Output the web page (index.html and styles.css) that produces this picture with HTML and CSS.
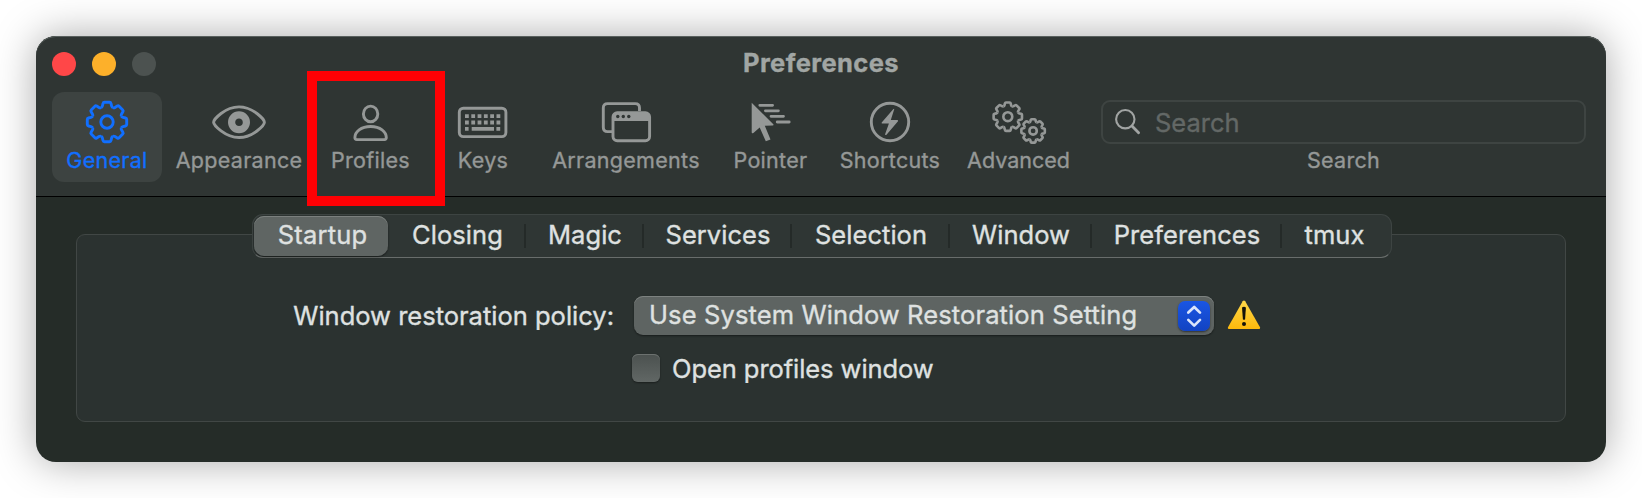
FILE: index.html
```html
<!DOCTYPE html>
<html lang="en">
<head>
<meta charset="utf-8">
<title>Preferences</title>
<link rel="stylesheet" href="styles.css">
</head>
<body>
<main class="window">
  <header class="toolbar">
    <div class="titlebar">
      <div class="lights"><i class="light close"></i><i class="light minimize"></i><i class="light zoom"></i></div>
      <h1 class="title">Preferences</h1>
    </div>
    <nav class="items">
      <div class="item active">
        <svg class="icon" width="44" height="44" viewBox="-22 -22 44 44">
          <defs>
            <path id="tooth" d="M-5.9-14.3Q-4.9-14.8-4.6-16L-4-18.5Q-3.7-19.7-2.6-19.7H2.6Q3.7-19.7 4-18.5L4.6-16Q4.9-14.8 5.9-14.3" vector-effect="non-scaling-stroke"/>
            <g id="gear">
              <use href="#tooth"/><use href="#tooth" transform="rotate(45)"/><use href="#tooth" transform="rotate(90)"/><use href="#tooth" transform="rotate(135)"/><use href="#tooth" transform="rotate(180)"/><use href="#tooth" transform="rotate(225)"/><use href="#tooth" transform="rotate(270)"/><use href="#tooth" transform="rotate(315)"/>
              <circle r="6.2" vector-effect="non-scaling-stroke"/>
            </g>
          </defs>
          <use href="#gear" class="line"/>
        </svg>
        <span class="label">General</span>
      </div>
      <div class="item">
        <svg class="icon" width="56" height="44" viewBox="-28 -22 56 44">
          <path class="line" d="M-25.4 0.3C-25.4-2.6-14-15.1 0-15.1S25.4-2.6 25.4 0.3S14 15.5 0 15.5S-25.4 3 -25.4 0.3Z"/>
          <circle cy="0.2" r="7.4" fill="none" stroke="currentColor" stroke-width="7.2"/>
        </svg>
        <span class="label">Appearance</span>
      </div>
      <div class="item">
        <svg class="icon" width="44" height="44" viewBox="-22 -22 44 44">
          <ellipse class="line" cx="-0.4" cy="-8.1" rx="7.2" ry="7.8"/>
          <path class="line" d="M-16.1 15.6C-16.1 10-10 4.5-.4 4.5S15.3 10 15.3 15.6Q15.3 17.6 13.4 17.6H-14.2Q-16.1 17.6-16.1 15.6Z"/>
        </svg>
        <span class="label">Profiles</span>
      </div>
      <div class="item">
        <svg class="icon" width="52" height="44" viewBox="-26 -22 52 44">
          <rect class="line" x="-23.7" y="-13.8" width="46.6" height="28.4" rx="4"/>
          <path d="M-18-5.8H17.4M-18 .5H17.4" fill="none" stroke="currentColor" stroke-width="3.8" stroke-dasharray="3.8 2.5"/>
          <path d="M-18 6.9h3.6M-11.3 6.9h22.3M13.4 6.9h3.8" fill="none" stroke="currentColor" stroke-width="3.6"/>
        </svg>
        <span class="label">Keys</span>
      </div>
      <div class="item">
        <svg class="icon" width="52" height="44" viewBox="-26 -22 52 44">
          <path class="line" d="M-14 9.6H-18.4Q-22.7 9.6-22.7 5.3V-14.1Q-22.7-18.4-18.4-18.4H9.2Q13.5-18.4 13.5-14.1V-11"/>
          <rect class="line" x="-13" y="-9.3" width="36.6" height="28" rx="4.2"/>
          <path d="M-13-1V-5.3Q-13-9.3-9-9.3H19.4Q23.4-9.3 23.4-5.3V-1Z" fill="currentColor"/>
          <g class="hole"><circle cx="-8.2" cy="-5.5" r="1.7"/><circle cx="-2.7" cy="-5.5" r="1.7"/><circle cx="2.8" cy="-5.5" r="1.7"/></g>
        </svg>
        <span class="label">Arrangements</span>
      </div>
      <div class="item">
        <svg class="icon" width="44" height="44" viewBox="-22 -22 44 44">
          <path d="M-19.3-19.2L2.3 2.3Q3 3.4 1.7 3.4L-6.2 3.7L-.5 17.4L-5.2 19.2L-11.3 5.6L-17.6 11Q-19.3 12-19.3 10.3Z" fill="currentColor"/>
          <path d="M-11.2-16.7H1.6M-5.6-11.2H7.4M0-5.7H12.5M6.2 0H18.2" fill="none" stroke="currentColor" stroke-width="2.8" stroke-linecap="round"/>
        </svg>
        <span class="label">Pointer</span>
      </div>
      <div class="item">
        <svg class="icon" width="44" height="44" viewBox="-22 -22 44 44">
          <circle class="line" r="18.7"/>
          <path d="M4.3-13Q4-13.4 3.2-12.7L-8.3.4Q-8.8 1.4-7.8 1.5H-1.1L-4.9 12.2Q-4.8 13.6-3.5 12.7L8-.7Q8.4-1.7 7.4-1.9H.8Z" fill="currentColor"/>
        </svg>
        <span class="label">Shortcuts</span>
      </div>
      <div class="item">
        <svg class="icon" width="56" height="44" viewBox="-28 -22 56 44">
          <use href="#gear" class="line thin" transform="translate(-11.2 -5.3) scale(.72)"/>
          <use href="#gear" class="line thin" transform="translate(14.1 8.9) scale(.595)"/>
        </svg>
        <span class="label tight">Advanced</span>
      </div>
      <div class="search">
        <div class="field">
          <svg width="28" height="28" viewBox="0 0 28 28"><circle cx="11.3" cy="11.2" r="9.2" fill="none" stroke="#a1a4a3" stroke-width="2.1"/><path d="M18 18L24.6 24.8" stroke="#a1a4a3" stroke-width="2.8" stroke-linecap="round"/></svg>
          <span>Search</span>
        </div>
        <span class="label">Search</span>
      </div>
    </nav>
    <div class="highlight"></div>
  </header>
  <section class="content">
    <div class="tabs">
      <span class="tab selected">Startup</span><span class="tab">Closing</span><span class="tab">Magic</span><span class="tab">Services</span><span class="tab">Selection</span><span class="tab">Window</span><span class="tab">Preferences</span><span class="tab">tmux</span>
    </div>
    <div class="group">
      <div class="row">
        <span class="caption">Window restoration policy:</span>
        <div class="popup">
          <span>Use System Window Restoration Setting</span>
          <span class="stepper"><svg width="32" height="30" viewBox="0 0 32 30"><path d="M10.3 11.6L16.2 6L22 11.6M10.3 18.9L16.2 24.6L22 18.9" fill="none" stroke="#dbe5fb" stroke-width="2.7" stroke-linecap="round" stroke-linejoin="round"/></svg></span>
        </div>
        <svg class="warning" width="34" height="30" viewBox="0 0 34 30">
          <defs><linearGradient id="amber" x2="0" y2="1"><stop stop-color="#ffd84a"/><stop offset="1" stop-color="#fdb90c"/></linearGradient></defs>
          <path d="M15.7 1.3Q17 -.5 18.2 1.3L33 27.3Q33.5 29 32 29H2Q.4 29 1 27.3Z" fill="url(#amber)"/>
          <path d="M15 7.5Q17 6.2 18.9 7.5L18.1 19.2Q17 20.2 15.9 19.2Z" fill="#15130b"/><circle cx="17" cy="23.9" r="2" fill="#15130b"/>
        </svg>
      </div>
      <div class="row option">
        <span class="checkbox"></span>
        <span>Open profiles window</span>
      </div>
    </div>
  </section>
</main>
</body>
</html>
```
FILE: styles.css
```css
* { box-sizing: border-box; }
body {
  margin: 0;
  height: 498px;
  padding: 36px;
  overflow: hidden;
  background: #fff;
  font-family: Inter, sans-serif;
  color: #dfe1e0;
  -webkit-text-stroke: .35px currentColor;
}
.window {
  position: relative;
  width: 1570px;
  height: 426px;
  border-radius: 20px;
  background: #252c28;
  box-shadow: 0 0 42px rgba(0, 0, 0, .34);
}
.toolbar {
  height: 161px;
  border-radius: 20px 20px 0 0;
  border-bottom: 1px solid #000;
  background: #2f3533;
  box-shadow: inset 0 1px 0 #59605e;
}
.titlebar {
  display: grid;
  grid-template-columns: 200px 1fr 200px;
  align-items: center;
  height: 56px;
}
.lights { display: flex; gap: 16px; padding-left: 16px; }
.light { width: 24px; height: 24px; border-radius: 50%; }
.close { background: #ff4748; }
.minimize { background: #fdb02a; }
.zoom { background: #4c5250; }
.title {
  margin: 0;
  padding-bottom: 3px;
  text-align: center;
  font-size: 25.5px;
  line-height: 32px;
  font-weight: 700;
  letter-spacing: .4px;
  color: #a1a6a4;
}
.items {
  display: grid;
  grid-template-columns: 110px 154px 109px 116px 170px 119px 120px 137px 485px;
  padding-left: 16px;
}
.item {
  display: flex;
  flex-direction: column;
  align-items: center;
  height: 90px;
  padding-top: 8px;
  color: #959897;
}
.icon { display: block; }
.label {
  margin-top: 2px;
  font-size: 21.5px;
  line-height: 28px;
  letter-spacing: .3px;
  white-space: nowrap;
}
.tight { letter-spacing: 0; }
.active { border-radius: 12px; background: #3d4341; color: #116fff; }
.line {
  fill: none;
  stroke: currentColor;
  stroke-width: 2.9;
  stroke-linejoin: round;
}
.thin { stroke-width: 2.6; }
.hole { fill: #2f3533; }
.search {
  display: flex;
  flex-direction: column;
  align-items: center;
  margin-left: 14px;
  width: 485px;
  padding-top: 8px;
  color: #959897;
}
.field {
  display: flex;
  align-items: center;
  gap: 13px;
  width: 485px;
  height: 44px;
  padding-left: 11px;
  border: 2px solid #3e4442;
  border-radius: 9px;
  font-size: 25.5px;
  color: #636866;
}
.field span { line-height: 32px; padding-top: 1px; }
.highlight {
  position: absolute;
  left: 271px;
  top: 35px;
  width: 138px;
  height: 135px;
  border: 10px solid #ff0004;
}
.content { padding: 17px 40px 40px; font-size: 25.5px; line-height: 32px; letter-spacing: .05px; }
.tabs {
  position: relative;
  display: grid;
  grid-template-columns: 136px 137px 118px 148px 158px 142px 190px 109px;
  width: 1140px;
  height: 44px;
  margin: 0 0 -24px 176px;
  border: 1px solid #3d4442;
  border-bottom-color: #686d6b;
  border-radius: 11px;
  background: #2f3634;
}
.tab {
  display: flex;
  align-items: center;
  justify-content: center;
  padding: 0 0 3px;
  background: linear-gradient(#242a28, #242a28) right 9px / 2px 24px no-repeat;
}
.tab:last-child { background: none; padding-right: 4px; }
.selected {
  margin: 1px 1px 1px 1px;
  padding-left: 3px;
  letter-spacing: .2px;
  border-radius: 10px;
  background: #5f6563;
  box-shadow: inset 0 1px 0 #7b807e, 0 1px 2px rgba(0, 0, 0, .5);
}
.group {
  height: 188px;
  padding-top: 61px;
  border: 1px solid #414745;
  border-radius: 9px;
  background: #2b3230;
}
.row { display: flex; align-items: center; height: 39px; }
.caption { width: 557px; padding-right: 20px; text-align: right; white-space: nowrap; letter-spacing: 0; }
.popup {
  display: flex;
  align-items: center;
  justify-content: space-between;
  width: 580px;
  height: 39px;
  padding: 0 4px 0 15px;
  border-radius: 9px;
  background: #5e6462;
  box-shadow: inset 0 1px 0 #7d8280, 0 1px 2px rgba(0, 0, 0, .45);
  letter-spacing: .12px;
  white-space: nowrap;
}
.popup > span:first-child { padding-bottom: 2px; }
.stepper {
  width: 32px;
  height: 30px;
  border-radius: 7px;
  background: linear-gradient(#1a56e4, #1243c2);
  box-shadow: 0 1px 2px rgba(0, 0, 0, .5);
}
.stepper svg { display: block; }
.warning { margin: 0 0 2px 13px; }
.option { gap: 12px; margin-top: 14px; padding-left: 555px; letter-spacing: -.07px; }
.checkbox {
  width: 28px;
  height: 28px;
  margin-bottom: 2px;
  border-radius: 6px;
  background: linear-gradient(#4b514f, #616765);
  box-shadow: inset 0 1px 0 #6c716f, 0 1px 2px rgba(0, 0, 0, .4);
}
```
